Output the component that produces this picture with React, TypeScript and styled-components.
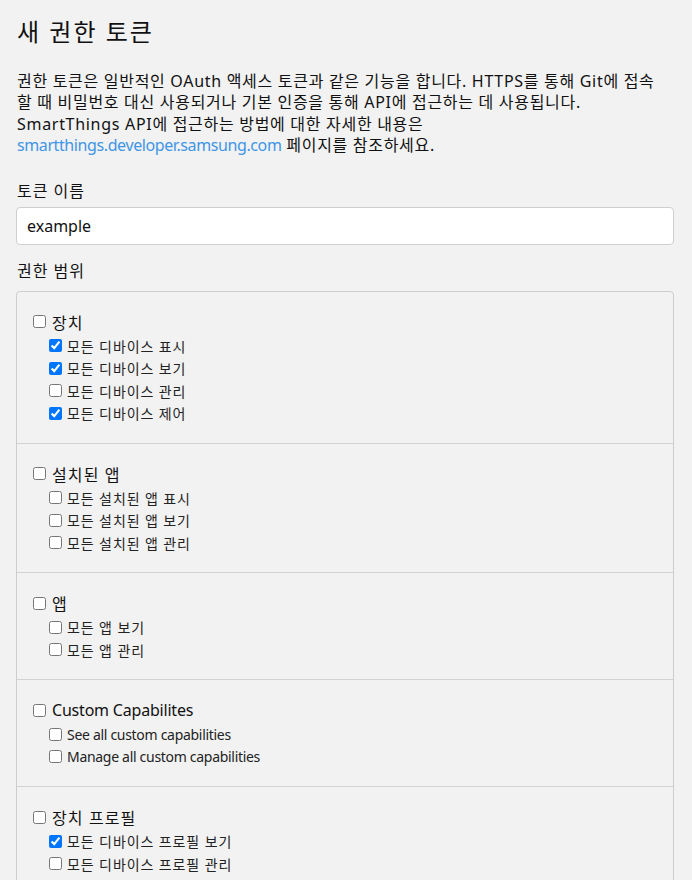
import React, { useState } from "react";
import styled, { createGlobalStyle } from "styled-components";

const GlobalStyle = createGlobalStyle`
  html, body {
    margin: 0;
    padding: 0;
    background: #f2f2f2;
  }
  body {
    font-family: "Noto Sans", "Noto Sans CJK KR", sans-serif;
    color: #111;
  }
  * {
    box-sizing: border-box;
  }
`;

const Page = styled.div`
  padding: 16px 18px 24px 16px;
`;

const Title = styled.h1`
  margin: 0 0 0 1px;
  font-size: 24px;
  font-weight: 400;
  line-height: 32px;
  letter-spacing: 2px;
`;

const Intro = styled.p`
  margin: 23px 0 0 1px;
  font-size: 16px;
  line-height: 21.4px;
  letter-spacing: 0.7px;
`;

const Link = styled.a`
  color: #3f95e6;
  text-decoration: none;
  letter-spacing: -0.4px;
`;

const Label = styled.div`
  margin: ${(p: { $top: number }) => p.$top}px 0 0 1px;
  font-size: 16px;
  line-height: 21px;
  letter-spacing: 1px;
`;

const TextInput = styled.input`
  display: block;
  width: 100%;
  height: 38px;
  margin-top: 5px;
  padding: 0 10px;
  font: inherit;
  font-size: 16px;
  color: #111;
  background: #fff;
  border: 1px solid #cfcfcf;
  border-radius: 4px;
  outline: none;
`;

const ScopeBox = styled.div`
  margin-top: 9px;
  border: 1px solid #cdcdcd;
  border-radius: 4px;
`;

const Section = styled.div`
  padding: 19px 16px 18px;
  & + & {
    border-top: 1px solid #d2d2d2;
  }
`;

type RowProps = { $latin: boolean };

const HeaderRow = styled.label<RowProps>`
  display: flex;
  align-items: center;
  height: 22px;
  font-size: 16px;
  letter-spacing: ${(p) => (p.$latin ? "-0.2px" : "1.1px")};
`;

const ItemRow = styled.label<RowProps>`
  display: flex;
  align-items: center;
  height: 22.5px;
  padding-left: 16px;
  font-size: 14px;
  color: #222;
  letter-spacing: ${(p) => (p.$latin ? "-0.3px" : "0.9px")};
`;

const Items = styled.div`
  margin-top: 2px;
`;

const Check = styled.input.attrs({ type: "checkbox" })<{ $gap: number }>`
  width: 13px;
  height: 13px;
  flex: none;
  margin: 0 ${(p) => p.$gap}px 0 0;
  accent-color: #0075ff;
`;

type Scope = {
  title: string;
  latin?: boolean;
  items: { label: string; checked: boolean }[];
};

const SCOPES: Scope[] = [
  {
    title: "장치",
    items: [
      { label: "모든 디바이스 표시", checked: true },
      { label: "모든 디바이스 보기", checked: true },
      { label: "모든 디바이스 관리", checked: false },
      { label: "모든 디바이스 제어", checked: true },
    ],
  },
  {
    title: "설치된 앱",
    items: [
      { label: "모든 설치된 앱 표시", checked: false },
      { label: "모든 설치된 앱 보기", checked: false },
      { label: "모든 설치된 앱 관리", checked: false },
    ],
  },
  {
    title: "앱",
    items: [
      { label: "모든 앱 보기", checked: false },
      { label: "모든 앱 관리", checked: false },
    ],
  },
  {
    title: "Custom Capabilites",
    latin: true,
    items: [
      { label: "See all custom capabilities", checked: false },
      { label: "Manage all custom capabilities", checked: false },
    ],
  },
  {
    title: "장치 프로필",
    items: [
      { label: "모든 디바이스 프로필 보기", checked: true },
      { label: "모든 디바이스 프로필 관리", checked: false },
    ],
  },
];

export default function App() {
  const [name, setName] = useState("example");

  return (
    <Page>
      <GlobalStyle />
      <Title>새 권한 토큰</Title>
      <Intro>
        권한 토큰은 일반적인 OAuth 액세스 토큰과 같은 기능을 합니다. HTTPS를 통해 Git에 접속
        <br />
        할 때 비밀번호 대신 사용되거나 기본 인증을 통해 API에 접근하는 데 사용됩니다.
        <br />
        SmartThings API에 접근하는 방법에 대한 자세한 내용은
        <br />
        <Link href="#">smartthings.developer.samsung.com</Link> 페이지를 참조하세요.
      </Intro>
      <Label $top={24}>토큰 이름</Label>
      <TextInput value={name} onChange={(e) => setName(e.target.value)} />
      <Label $top={16}>권한 범위</Label>
      <ScopeBox>
        {SCOPES.map((scope) => (
          <Section key={scope.title}>
            <HeaderRow $latin={!!scope.latin}>
              <Check $gap={6} defaultChecked={false} />
              {scope.title}
            </HeaderRow>
            <Items>
              {scope.items.map((item) => (
                <ItemRow key={item.label} $latin={!!scope.latin}>
                  <Check $gap={5} defaultChecked={item.checked} />
                  {item.label}
                </ItemRow>
              ))}
            </Items>
          </Section>
        ))}
      </ScopeBox>
    </Page>
  );
}
